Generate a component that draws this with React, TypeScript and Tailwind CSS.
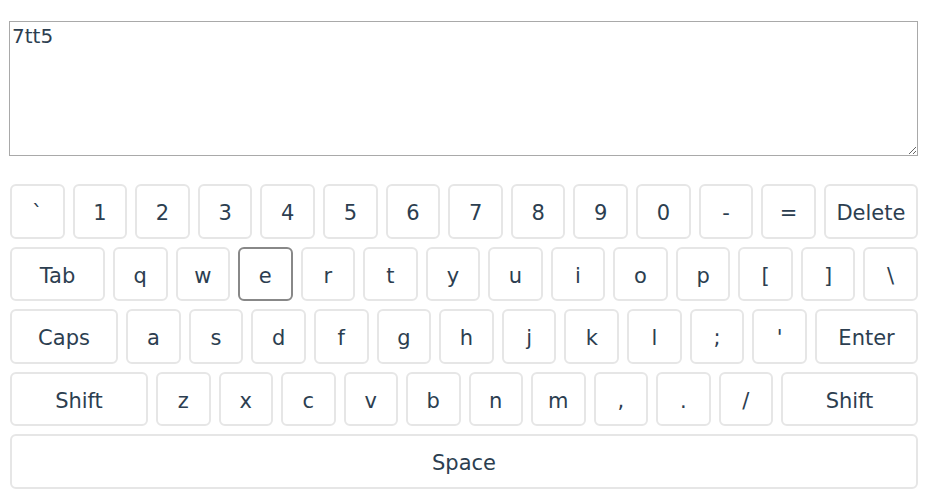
import { useState } from "react";

type K = { label: string; w?: string };

const rows: K[][] = [
  [
    ..."`1234567890-=".split("").map((c) => ({ label: c })),
    { label: "Delete", w: "w-[94px]" },
  ],
  [
    { label: "Tab", w: "w-[95px]" },
    ..."qwertyuiop[]\\".split("").map((c) => ({ label: c })),
  ],
  [
    { label: "Caps", w: "w-[108px]" },
    ..."asdfghjkl;'".split("").map((c) => ({ label: c })),
    { label: "Enter", w: "w-[103px]" },
  ],
  [
    { label: "Shift", w: "w-[138px]" },
    ..."zxcvbnm,./".split("").map((c) => ({ label: c })),
    { label: "Shift", w: "w-[137px]" },
  ],
];

export default function App() {
  const [text, setText] = useState("7tt5");

  return (
    <div
      className="w-[940px] h-[500px] bg-white px-[9px] pt-[21px] text-[#2c3e50] text-[21px]"
      style={{ fontFamily: '"DejaVu Sans", sans-serif' }}
    >
      <textarea
        value={text}
        onChange={(e) => setText(e.target.value)}
        className="block w-[909px] h-[135px] border border-[#a9a9a9] p-[2px] text-[20px] leading-[1.2] outline-none"
      />
      <div className="ml-[1px] mt-[28px] w-[908px] flex flex-col gap-2">
        {rows.map((row, i) => (
          <div key={i} className="flex gap-2">
            {row.map((k, j) => (
              <button
                key={j}
                className={`h-[54.6px] pt-[5px] rounded-md border-2 bg-white flex items-center justify-center ${
                  k.w ? k.w + " shrink-0" : "flex-1 basis-0"
                } ${k.label === "e" ? "border-[#888888]" : "border-[#e6e6e6]"}`}
              >
                {k.label}
              </button>
            ))}
          </div>
        ))}
        <button className="h-[54.6px] pt-[5px] w-full rounded-md border-2 border-[#e6e6e6] bg-white flex items-center justify-center">
          Space
        </button>
      </div>
    </div>
  );
}
